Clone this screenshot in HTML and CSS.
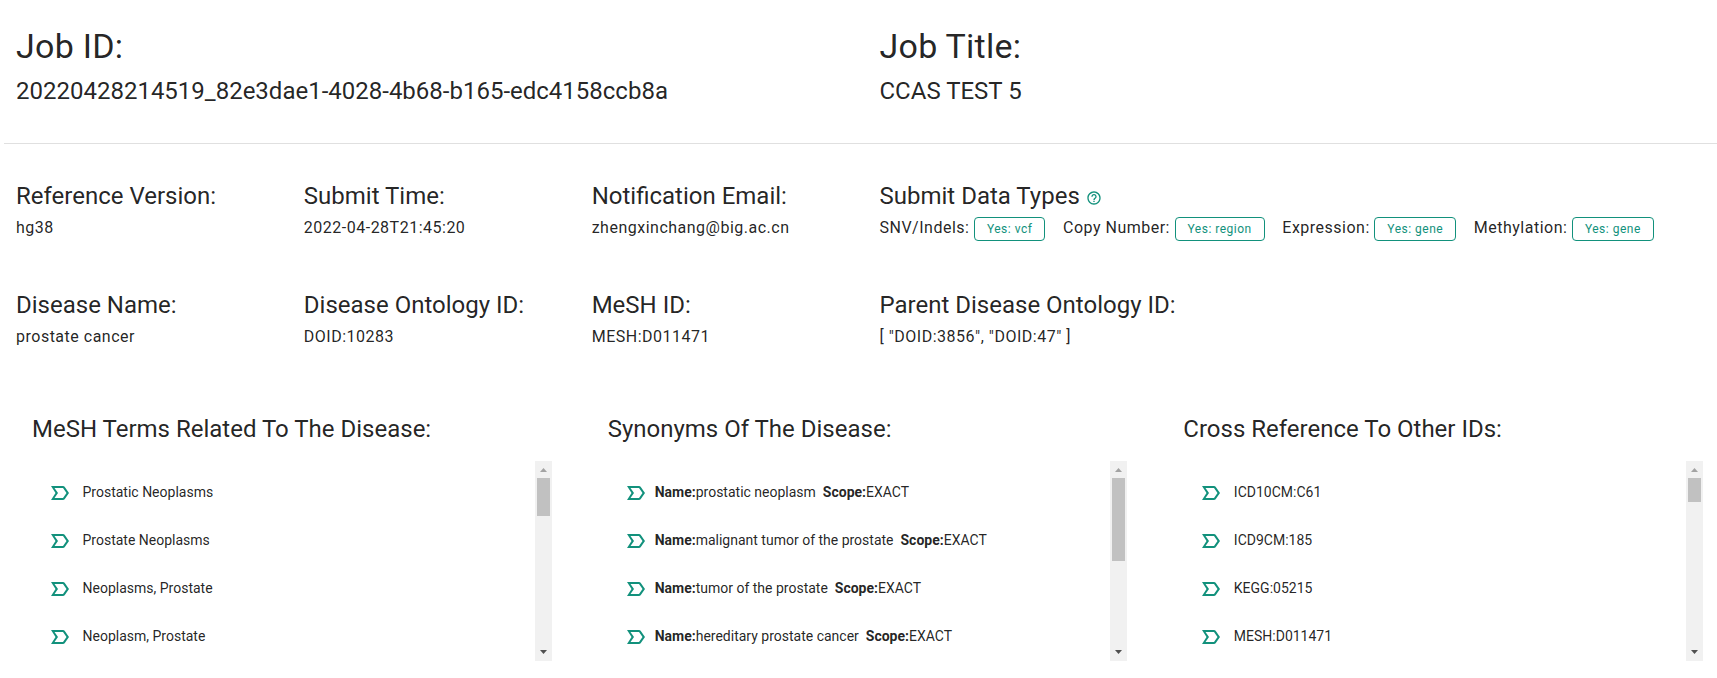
FILE: index.html
```html
<!DOCTYPE html>
<html lang="en">
<head>
<meta charset="utf-8">
<title>Job detail</title>
<link rel="stylesheet" href="styles.css">
</head>
<body>
<svg class="defs" aria-hidden="true">
  <symbol id="label" viewBox="0 0 24 24"><path d="M15 19H3l4.5-7L3 5h12c.65 0 1.26.31 1.63.84L21 12l-4.37 6.16c-.37.52-.98.84-1.63.84zm-8.5-2H15l3.5-5L15 7H6.5l3.5 5-3.5 5z"/></symbol>
  <symbol id="help" viewBox="0 0 24 24"><path d="M11 18h2v-2h-2v2zm1-16C6.480 2 2 6.480 2 12s4.480 10 10 10 10-4.480 10-10S17.520 2 12 2zm0 18c-4.410 0-8-3.590-8-8s3.590-8 8-8 8 3.590 8 8-3.590 8-8 8zm0-14c-2.210 0-4 1.790-4 4h2c0-1.100.9-2 2-2s2 .9 2 2c0 2-3 1.750-3 5h2c0-2.250 3-2.500 3-5 0-2.210-1.790-4-4-4z"/></symbol>
  <symbol id="up" viewBox="0 0 17 17"><path d="M5 11h7L8.500 7z"/></symbol>
  <symbol id="down" viewBox="0 0 17 17"><path d="M5 6h7L8.500 10z"/></symbol>
</svg>
<main class="page">
  <header class="job">
    <div class="job-field"><h1>Job ID:</h1><p>20220428214519_82e3dae1-4028-4b68-b165-edc4158ccb8a</p></div>
    <div class="job-field"><h1>Job Title:</h1><p>CCAS TEST 5</p></div>
  </header>
  <section class="facts">
    <div class="fact"><h2>Reference Version:</h2><p>hg38</p></div>
    <div class="fact"><h2>Submit Time:</h2><p>2022-04-28T21:45:20</p></div>
    <div class="fact"><h2>Notification Email:</h2><p>zhengxinchang@big.ac.cn</p></div>
    <div class="fact">
      <h2>Submit Data Types <svg class="help"><use href="#help"/></svg></h2>
      <div class="types">
        <div class="type">SNV/Indels: <span class="chip">Yes: vcf</span></div>
        <div class="type">Copy Number: <span class="chip">Yes: region</span></div>
        <div class="type">Expression: <span class="chip">Yes: gene</span></div>
        <div class="type">Methylation: <span class="chip">Yes: gene</span></div>
      </div>
    </div>
    <div class="fact"><h2>Disease Name:</h2><p>prostate cancer</p></div>
    <div class="fact"><h2>Disease Ontology ID:</h2><p>DOID:10283</p></div>
    <div class="fact"><h2>MeSH ID:</h2><p>MESH:D011471</p></div>
    <div class="fact"><h2>Parent Disease Ontology ID:</h2><p>[ "DOID:3856", "DOID:47" ]</p></div>
  </section>
  <section class="lists">
    <div class="panel">
      <h2>MeSH Terms Related To The Disease:</h2>
      <div class="scroll">
        <ul>
          <li><svg><use href="#label"/></svg>Prostatic Neoplasms</li>
          <li><svg><use href="#label"/></svg>Prostate Neoplasms</li>
          <li><svg><use href="#label"/></svg>Neoplasms, Prostate</li>
          <li><svg><use href="#label"/></svg>Neoplasm, Prostate</li>
        </ul>
        <div class="bar"><svg class="up"><use href="#up"/></svg><div class="thumb thumb-mesh"></div><svg class="down"><use href="#down"/></svg></div>
      </div>
    </div>
    <div class="panel">
      <h2>Synonyms Of The Disease:</h2>
      <div class="scroll synonyms">
        <ul>
          <li><svg><use href="#label"/></svg><span><b>Name:</b>prostatic neoplasm&nbsp; <b>Scope:</b>EXACT</span></li>
          <li><svg><use href="#label"/></svg><span><b>Name:</b>malignant tumor of the prostate&nbsp; <b>Scope:</b>EXACT</span></li>
          <li><svg><use href="#label"/></svg><span><b>Name:</b>tumor of the prostate&nbsp; <b>Scope:</b>EXACT</span></li>
          <li><svg><use href="#label"/></svg><span><b>Name:</b>hereditary prostate cancer&nbsp; <b>Scope:</b>EXACT</span></li>
        </ul>
        <div class="bar"><svg class="up"><use href="#up"/></svg><div class="thumb thumb-synonyms"></div><svg class="down"><use href="#down"/></svg></div>
      </div>
    </div>
    <div class="panel">
      <h2>Cross Reference To Other IDs:</h2>
      <div class="scroll">
        <ul>
          <li><svg><use href="#label"/></svg>ICD10CM:C61</li>
          <li><svg><use href="#label"/></svg>ICD9CM:185</li>
          <li><svg><use href="#label"/></svg>KEGG:05215</li>
          <li><svg><use href="#label"/></svg>MESH:D011471</li>
        </ul>
        <div class="bar"><svg class="up"><use href="#up"/></svg><div class="thumb thumb-xref"></div><svg class="down"><use href="#down"/></svg></div>
      </div>
    </div>
  </section>
</main>
</body>
</html>
```
FILE: styles.css
```css
* { box-sizing: border-box; margin: 0; padding: 0; }
body {
  background: #fff;
  color: rgba(0, 0, 0, 0.87);
  font: 400 16px/24px Roboto, sans-serif;
  letter-spacing: 0.5px;
  overflow: hidden;
}
.defs { display: none; }
.page { width: 1727px; margin-left: 4px; }
h1 { font-size: 34px; line-height: 40px; font-weight: 400; letter-spacing: 0.25px; }
h2 { font-size: 24px; line-height: 32px; font-weight: 400; letter-spacing: 0; }

.job {
  display: grid;
  grid-template-columns: 1fr 1fr;
  height: 144px;
  padding-top: 26px;
  border-bottom: 1px solid rgba(0, 0, 0, 0.12);
}
.job-field { padding: 0 12px; }
.job-field p { margin-top: 9px; font-size: 24px; line-height: 32px; letter-spacing: 0; }

.facts {
  display: grid;
  grid-template-columns: 1fr 1fr 1fr 3fr;
  grid-auto-rows: 109px;
  padding-top: 36px;
}
.fact { padding: 0 12px; white-space: nowrap; }
.fact p { margin-top: 4px; }
.help { width: 16px; height: 16px; vertical-align: -2px; fill: #12917c; }
.types { display: flex; gap: 17.6px; margin-top: 4px; }
.type { display: flex; gap: 4.5px; }
.chip {
  height: 24px;
  margin-top: 1px;
  padding: 0 12px;
  border: 1px solid #12917c;
  border-radius: 4px;
  color: #12917c;
  font-size: 12px;
  line-height: 22px;
}

.lists { display: grid; grid-template-columns: repeat(3, 1fr); padding-top: 15px; }
.panel { padding: 0 28px; }
.scroll {
  display: flex;
  justify-content: space-between;
  height: 200px;
  margin-top: 16px;
  overflow: hidden;
}
ul { padding: 8px 16px; list-style: none; }
li {
  display: flex;
  align-items: center;
  gap: 10.5px;
  height: 48px;
  padding-bottom: 2px;
  font-size: 14px;
  line-height: 20px;
  letter-spacing: 0;
}
li svg { width: 24px; height: 24px; margin-top: 2px; fill: #12917c; }
.synonyms li { gap: 7px; }
b { font-weight: 700; }
.bar { display: flex; flex-direction: column; width: 17px; background: #f1f1f1; }
.bar svg { width: 17px; height: 17px; }
.up { fill: #a3a3a3; }
.down { margin-top: auto; fill: #505050; }
.thumb { margin: 0 2px; background: #c1c1c1; }
.thumb-mesh { height: 38px; }
.thumb-synonyms { height: 83px; }
.thumb-xref { height: 24px; }
```
